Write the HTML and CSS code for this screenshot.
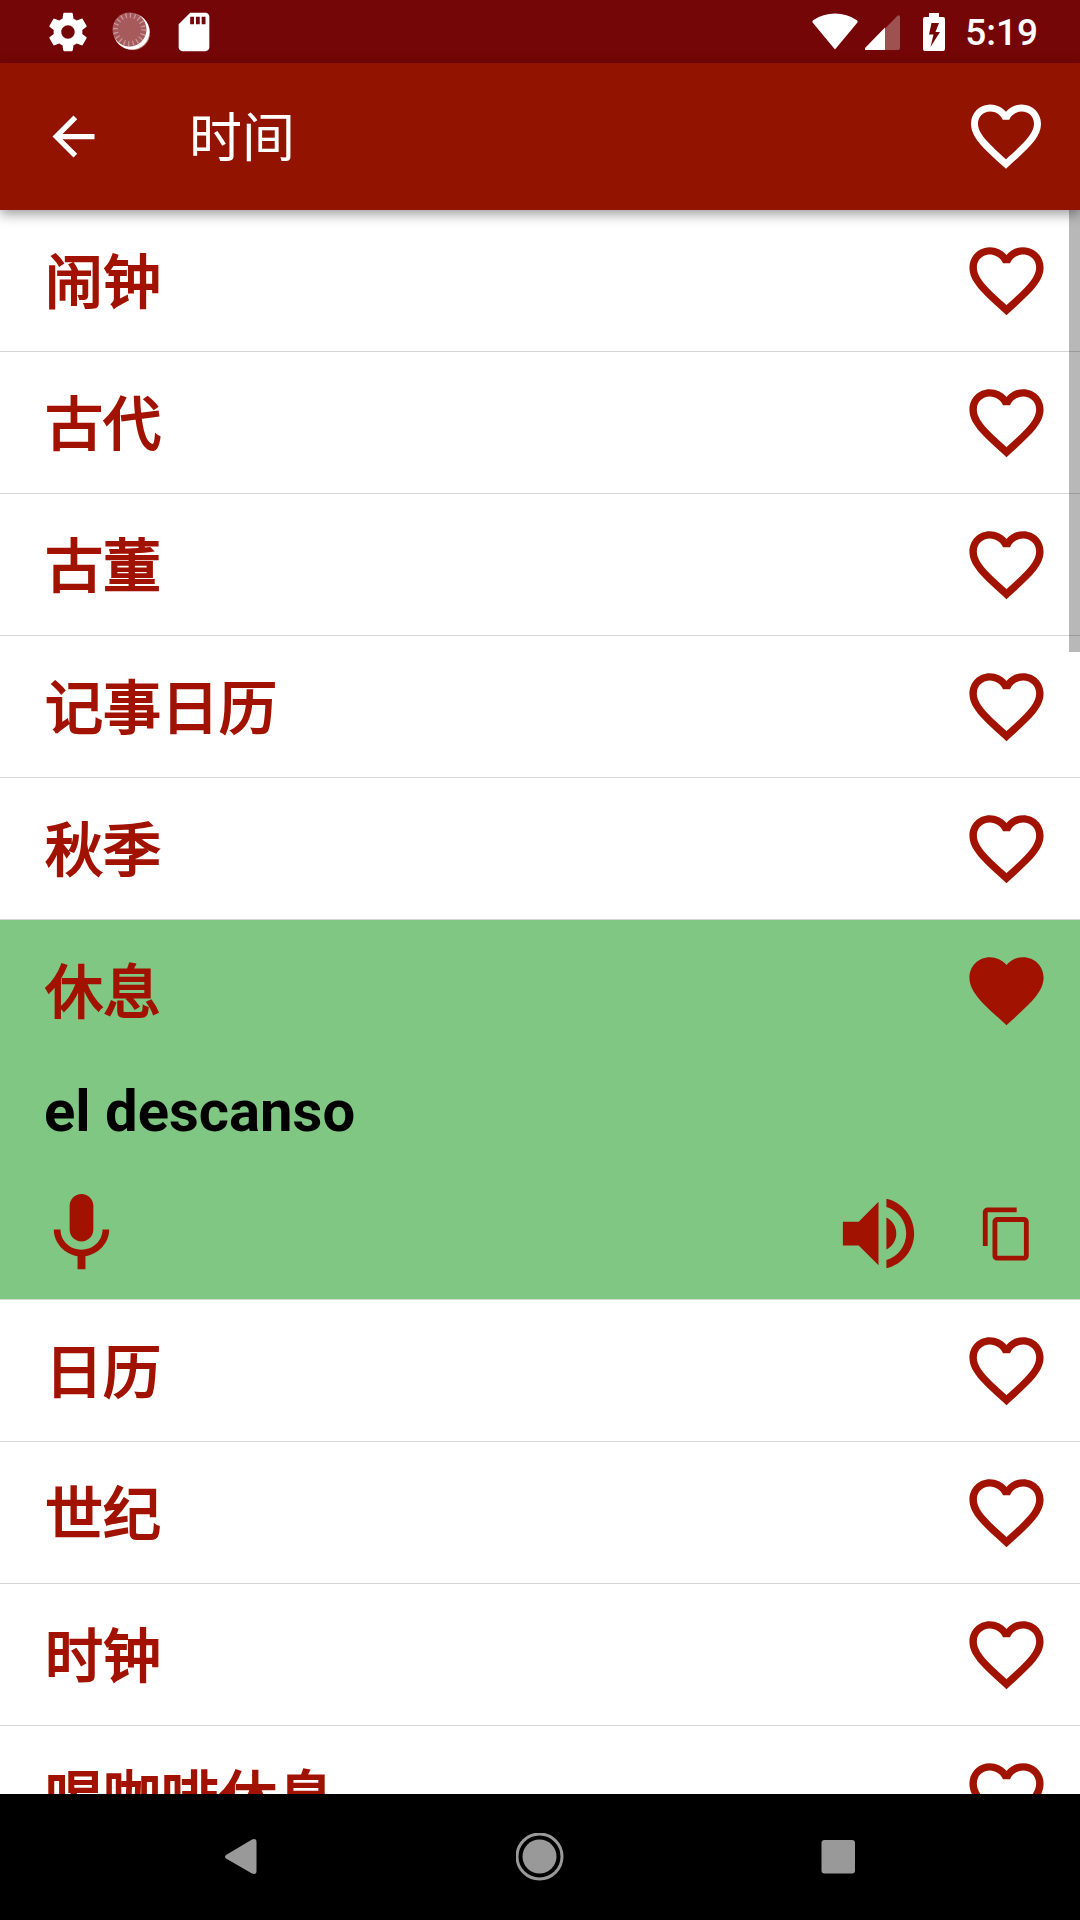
FILE: index.html
```html
<!DOCTYPE html>
<html lang="zh-CN">
<head>
<meta charset="utf-8">
<meta name="viewport" content="width=device-width, initial-scale=1">
<title>时间</title>
<link rel="stylesheet" href="styles.css">
</head>
<body>
<svg class="symbols" aria-hidden="true">
  <symbol id="heart-outline" viewBox="0 0 24 24"><path d="M16.5 3c-1.74 0-3.41.81-4.5 2.09C10.91 3.81 9.24 3 7.5 3 4.42 3 2 5.42 2 8.5c0 3.78 3.4 6.86 8.55 11.54L12 21.35l1.45-1.32C18.6 15.36 22 12.28 22 8.5 22 5.42 19.58 3 16.5 3zm-4.4 15.55l-.1.1-.1-.1C7.14 14.24 4 11.39 4 8.5 4 6.5 5.5 5 7.5 5c1.54 0 3.04.99 3.57 2.36h1.87C13.46 5.99 14.96 5 16.5 5c2 0 3.5 1.5 3.5 3.5 0 2.89-3.14 5.74-7.9 10.05z"/></symbol>
  <symbol id="heart" viewBox="0 0 24 24"><path d="M12 21.35l-1.45-1.32C5.4 15.36 2 12.28 2 8.5 2 5.42 4.42 3 7.5 3c1.74 0 3.41.81 4.5 2.09C13.09 3.81 14.76 3 16.5 3 19.58 3 22 5.42 22 8.5c0 3.78-3.4 6.86-8.55 11.54L12 21.35z"/></symbol>
</svg>

<div class="status-bar">
  <div class="status-left">
    <svg class="status-icon" viewBox="0 0 24 24"><path d="M19.43 12.98c.04-.32.07-.64.07-.98s-.03-.66-.07-.98l2.11-1.65c.19-.15.24-.42.12-.64l-2-3.46c-.12-.22-.39-.3-.61-.22l-2.49 1c-.52-.4-1.08-.73-1.69-.98l-.38-2.65C14.46 2.18 14.25 2 14 2h-4c-.25 0-.46.18-.49.42l-.38 2.65c-.61.25-1.17.59-1.69.98l-2.49-1c-.23-.09-.49 0-.61.22l-2 3.46c-.13.22-.07.49.12.64l2.11 1.65c-.04.32-.07.65-.07.98s.03.66.07.98l-2.11 1.65c-.19.15-.24.42-.12.64l2 3.46c.12.22.39.3.61.22l2.49-1c.52.4 1.08.73 1.69.98l.38 2.65c.03.24.24.42.49.42h4c.25 0 .46-.18.49-.42l.38-2.65c.61-.25 1.17-.59 1.69-.98l2.49 1c.23.09.49 0 .61-.22l2-3.46c.12-.22.07-.49-.12-.64l-2.11-1.65zM12 15.5c-1.93 0-3.5-1.57-3.5-3.5s1.57-3.5 3.5-3.5 3.5 1.57 3.5 3.5-1.57 3.5-3.5 3.5z"/></svg>
    <svg class="status-icon" viewBox="0 0 46 46">
      <circle cx="25" cy="24" r="17" fill="#c08485"/>
      <circle cx="23.500" cy="22.500" r="18"/>
      <circle cx="21.500" cy="20.500" r="17" fill="#a65a5b"/>
      <circle cx="21.500" cy="20.500" r="14" fill="none" stroke="#c99b9c" stroke-width="5" stroke-dasharray="1.200 3.198"/>
    </svg>
    <svg class="status-icon" viewBox="0 0 24 24"><path d="M18 2h-8L4 8v12c0 1.100.9 2 2 2h12c1.100 0 2-.9 2-2V4c0-1.100-.9-2-2-2zm-6 6h-2V4h2v4zm3 0h-2V4h2v4zm3 0h-2V4h2v4z"/></svg>
  </div>
  <div class="status-right">
    <svg class="wifi" viewBox="0 0 46 37"><path d="M23 36.500L1 10Q-.5 8.500 1.500 7Q11 .5 23 .5T44.500 7Q46.500 8.500 45 10z"/></svg>
    <svg class="signal" viewBox="0 0 35 35"><path d="M0 34L32.500 .8Q35 -.5 35 2V33Q35 35 33 35H1Q-1 35 0 33z" opacity=".3"/><path d="M20 12.500V35H1Q-1 35 .5 32.500z"/></svg>
    <svg class="battery" viewBox="0 0 22 38"><path fill-rule="evenodd" d="M6 0h10v4h4q2 0 2 2v30q0 2-2 2H2q-2 0-2-2V6q0-2 2-2h4zM8.500 10L6 21.500h4.500L7.500 34 17 19h-4.500L16 10z"/></svg>
    <span class="clock">5:19</span>
  </div>
</div>

<header class="app-bar">
  <button class="icon-button" aria-label="返回"><svg class="back" viewBox="0 0 24 24"><path d="M20 11H7.830l5.590-5.590L12 4l-8 8 8 8 1.410-1.410L7.830 13H20v-2z"/></svg></button>
  <h1 class="title">时间</h1>
  <button class="icon-button" aria-label="收藏"><svg class="favorite-all"><use href="#heart-outline"/></svg></button>
</header>

<main class="list-area">
  <ul class="words">
    <li class="word"><div class="word-head"><span class="term">闹钟</span><button class="icon-button" aria-label="收藏 闹钟"><svg class="favorite"><use href="#heart-outline"/></svg></button></div></li>
    <li class="word"><div class="word-head"><span class="term">古代</span><button class="icon-button" aria-label="收藏 古代"><svg class="favorite"><use href="#heart-outline"/></svg></button></div></li>
    <li class="word"><div class="word-head"><span class="term">古董</span><button class="icon-button" aria-label="收藏 古董"><svg class="favorite"><use href="#heart-outline"/></svg></button></div></li>
    <li class="word"><div class="word-head"><span class="term">记事日历</span><button class="icon-button" aria-label="收藏 记事日历"><svg class="favorite"><use href="#heart-outline"/></svg></button></div></li>
    <li class="word"><div class="word-head"><span class="term">秋季</span><button class="icon-button" aria-label="收藏 秋季"><svg class="favorite"><use href="#heart-outline"/></svg></button></div></li>
    <li class="word word-open">
      <div class="word-head"><span class="term">休息</span><button class="icon-button" aria-label="取消收藏 休息"><svg class="favorite"><use href="#heart"/></svg></button></div>
      <p class="translation" lang="es">el descanso</p>
      <div class="actions">
        <button class="icon-button" aria-label="录音"><svg class="action" viewBox="0 0 24 24"><path d="M12 14c1.660 0 2.990-1.340 2.990-3L15 5c0-1.660-1.340-3-3-3S9 3.340 9 5v6c0 1.660 1.340 3 3 3zm5.300-3c0 3-2.540 5.100-5.300 5.100S6.700 14 6.700 11H5c0 3.410 2.720 6.230 6 6.720V21h2v-3.280c3.280-.48 6-3.300 6-6.720h-1.700z"/></svg></button>
        <button class="icon-button push" aria-label="播放"><svg class="action" viewBox="0 0 24 24"><path d="M3 9v6h4l5 5V4L7 9H3zm13.500 3c0-1.770-1.020-3.290-2.500-4.030v8.050c1.480-.73 2.500-2.250 2.500-4.020zM14 3.230v2.060c2.890.86 5 3.540 5 6.710s-2.110 5.850-5 6.710v2.060c4.010-.91 7-4.490 7-8.770s-2.990-7.860-7-8.770z"/></svg></button>
        <button class="icon-button" aria-label="复制"><svg class="copy" viewBox="0 0 24 24"><path d="M16 1H4c-1.100 0-2 .9-2 2v14h2V3h12V1zm3 4H8c-1.100 0-2 .9-2 2v14c0 1.100.9 2 2 2h11c1.100 0 2-.9 2-2V7c0-1.100-.9-2-2-2zm0 16H8V7h11v14z"/></svg></button>
      </div>
    </li>
    <li class="word"><div class="word-head"><span class="term">日历</span><button class="icon-button" aria-label="收藏 日历"><svg class="favorite"><use href="#heart-outline"/></svg></button></div></li>
    <li class="word"><div class="word-head"><span class="term">世纪</span><button class="icon-button" aria-label="收藏 世纪"><svg class="favorite"><use href="#heart-outline"/></svg></button></div></li>
    <li class="word"><div class="word-head"><span class="term">时钟</span><button class="icon-button" aria-label="收藏 时钟"><svg class="favorite"><use href="#heart-outline"/></svg></button></div></li>
    <li class="word"><div class="word-head"><span class="term">喝咖啡休息</span><button class="icon-button" aria-label="收藏 喝咖啡休息"><svg class="favorite"><use href="#heart-outline"/></svg></button></div></li>
  </ul>
  <div class="scroll-thumb"></div>
</main>

<nav class="nav-bar">
  <button class="nav-button" aria-label="后退"><svg class="nav-icon" viewBox="0 0 48 48"><path d="M9 22L35 6.500Q39.500 5 39.500 9V38Q39.500 42 35 40.500L9 25.500Q7 23.750 9 22z"/></svg></button>
  <button class="nav-button" aria-label="主页"><svg class="nav-icon" viewBox="0 0 48 48"><circle cx="23.500" cy="23.500" r="17"/><circle class="ring" cx="23.500" cy="23.500" r="22.500"/></svg></button>
  <button class="nav-button" aria-label="最近任务"><svg class="nav-icon" viewBox="0 0 48 48"><rect x="6.500" y="7" width="33.500" height="33.500" rx="3"/></svg></button>
</nav>
</body>
</html>
```
FILE: styles.css
```css
* {
  box-sizing: border-box;
}

body {
  margin: 0;
  height: 100vh;
  display: flex;
  flex-direction: column;
  overflow: hidden;
  background: #fff;
  font-family: Roboto, "Noto Sans CJK SC", sans-serif;
}

svg {
  display: block;
  fill: currentColor;
}

.symbols {
  position: absolute;
  width: 0;
  height: 0;
}

.icon-button,
.nav-button {
  border: 0;
  padding: 0;
  background: none;
  color: inherit;
}

.status-bar {
  flex: none;
  height: 63px;
  padding: 0 42px 0 45px;
  display: flex;
  align-items: center;
  justify-content: space-between;
  background: #750607;
  color: #fff;
}

.status-left {
  display: flex;
  gap: 17px;
}

.status-icon {
  width: 46px;
  height: 46px;
}

.status-right {
  display: flex;
  align-items: center;
}

.wifi {
  width: 46px;
  height: 37px;
}

.signal {
  width: 35px;
  height: 35px;
  margin: 2px 23px 0 7px;
}

.battery {
  width: 22px;
  height: 38px;
}

.clock {
  margin-left: 20px;
  padding-top: 2px;
  font-size: 37px;
  line-height: 40px;
  font-weight: 500;
}

.app-bar {
  flex: none;
  height: 147px;
  padding: 0 32px 1px 42px;
  display: flex;
  align-items: center;
  background: #921300;
  color: #fff;
  box-shadow: 0 4px 12px rgba(0, 0, 0, 0.4);
  z-index: 1;
}

.back {
  width: 63px;
  height: 63px;
}

.title {
  flex: 1;
  margin: 0 0 0 84px;
  padding-top: 6px;
  font-size: 53px;
  line-height: 76px;
  font-weight: 400;
}

.favorite-all {
  width: 84px;
  height: 84px;
}

.list-area {
  position: relative;
  flex: 1;
  min-height: 0;
  overflow: hidden;
}

.words {
  margin: 0;
  padding: 0;
  list-style: none;
}

.word {
  border-bottom: 1px solid #d6d6d6;
  color: #a11300;
}

.word-open {
  background: #81c784;
}

.word-head {
  height: 141px;
  padding: 0 29px 0 45px;
  display: flex;
  align-items: center;
  justify-content: space-between;
}

.term {
  padding-top: 4px;
  font-size: 58px;
  line-height: 84px;
  font-weight: 400;
  -webkit-text-stroke: 2px currentColor;
}

.favorite {
  width: 89px;
  height: 89px;
}

.translation {
  margin: 0;
  padding: 16px 44px 0;
  color: #000;
  font-size: 58px;
  line-height: 68px;
  font-weight: 700;
}

.actions {
  padding: 41px 44px 18px 34px;
  display: flex;
  align-items: center;
}

.action {
  width: 95px;
  height: 95px;
}

.push {
  margin-left: auto;
}

.copy {
  width: 58px;
  height: 58px;
  margin-left: 52px;
}

.scroll-thumb {
  position: absolute;
  top: 0;
  right: 0;
  width: 11px;
  height: 442px;
  background: rgba(0, 0, 0, 0.28);
}

.nav-bar {
  flex: none;
  height: 126px;
  padding: 0 92px;
  display: flex;
  background: #000;
  color: #999;
}

.nav-button {
  flex: 1;
  display: flex;
  align-items: center;
  justify-content: center;
}

.nav-icon {
  width: 48px;
  height: 48px;
}

.ring {
  fill: none;
  stroke: currentColor;
  stroke-width: 3px;
}
```
